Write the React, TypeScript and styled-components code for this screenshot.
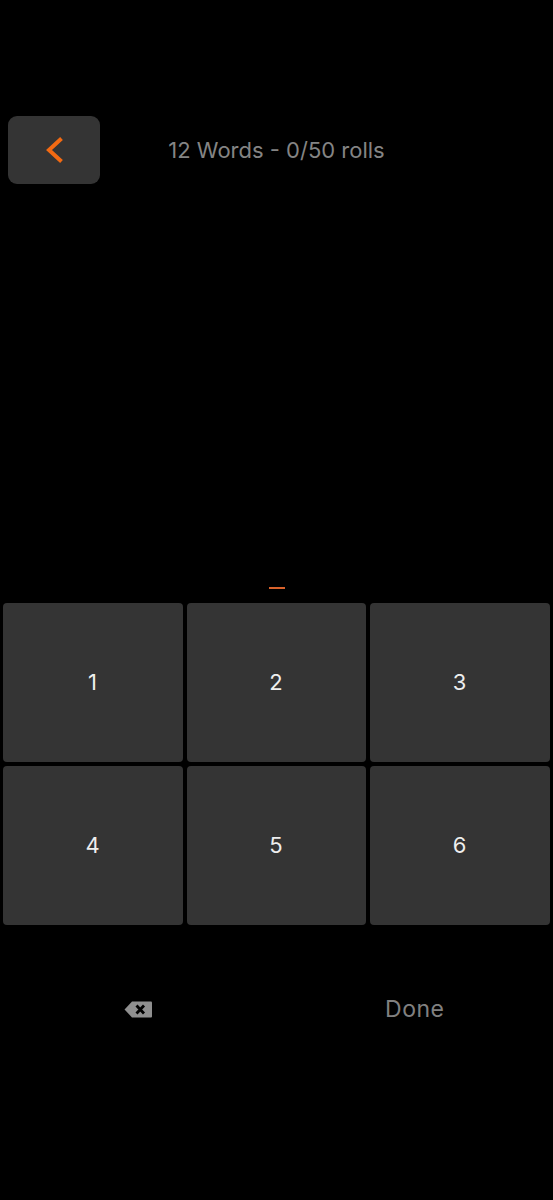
import React from 'react';
import styled, { createGlobalStyle } from 'styled-components';

const GlobalStyle = createGlobalStyle`
  html, body {
    margin: 0;
    padding: 0;
    background: #000;
  }
`;

const Screen = styled.div`
  box-sizing: border-box;
  width: 553px;
  height: 1200px;
  padding-top: 116px;
  background: #000;
  font-family: Inter, 'Open Sans', sans-serif;
  display: flex;
  flex-direction: column;
`;

const Header = styled.header`
  display: grid;
  grid-template-columns: 1fr auto 1fr;
  align-items: center;
  padding: 0 8px;
`;

const BackButton = styled.button`
  width: 92px;
  height: 68px;
  padding: 0 0 0 2px;
  border: 0;
  border-radius: 9px;
  background: #343434;
  display: flex;
  align-items: center;
  justify-content: center;
`;

const Title = styled.div`
  color: #848484;
  font-size: 22px;
  font-weight: 400;
  white-space: nowrap;
`;

const Entry = styled.div`
  height: 419px;
  display: flex;
  align-items: flex-end;
  justify-content: center;
  padding-bottom: 14px;
  box-sizing: border-box;
`;

const Cursor = styled.span`
  width: 16px;
  height: 2px;
  background: #d9622b;
`;

const Keypad = styled.div`
  display: grid;
  grid-template-columns: 180px 179px 180px;
  grid-auto-rows: 159px;
  gap: 4px;
  padding: 0 3px;
`;

const Key = styled.button`
  padding: 0 1px 2px 0;
  border: 0;
  border-radius: 4px;
  background: #343434;
  color: #eeeeee;
  font-family: inherit;
  font-size: 22px;
  font-weight: 400;
`;

const Actions = styled.div`
  display: grid;
  grid-template-columns: 1fr 1fr;
  align-items: center;
  height: 70px;
  margin-top: 49px;
`;

const Action = styled.button`
  padding: 0;
  border: 0;
  background: none;
  color: #808080;
  font-family: inherit;
  font-size: 23px;
  font-weight: 400;
  letter-spacing: 0.5px;
  display: flex;
  align-items: center;
  justify-content: center;
`;

const BackspaceIcon = () => (
  <svg width="28" height="17" viewBox="0 0 28 17" aria-hidden="true">
    <path d="M8 0.5H27a1 1 0 0 1 1 1V15.5a1 1 0 0 1-1 1H8L0.5 8.5Z" fill="#8f8f8f" />
    <path d="M12.5 4.5l7.5 8M20 4.5l-7.5 8" stroke="#000" strokeWidth="2.8" fill="none" />
  </svg>
);

const ChevronIcon = () => (
  <svg width="20" height="28" viewBox="0 0 20 28" aria-hidden="true">
    <path d="M16.5 2.5L4 14l12.5 11.5" stroke="#f26a13" strokeWidth="4" fill="none" />
  </svg>
);

const digits = ['1', '2', '3', '4', '5', '6'];

export default function App() {
  return (
    <Screen>
      <GlobalStyle />
      <Header>
        <BackButton aria-label="Back">
          <ChevronIcon />
        </BackButton>
        <Title>12 Words - 0/50 rolls</Title>
      </Header>
      <Entry>
        <Cursor />
      </Entry>
      <Keypad>
        {digits.map((d) => (
          <Key key={d}>{d}</Key>
        ))}
      </Keypad>
      <Actions>
        <Action aria-label="Backspace">
          <BackspaceIcon />
        </Action>
        <Action>Done</Action>
      </Actions>
    </Screen>
  );
}
